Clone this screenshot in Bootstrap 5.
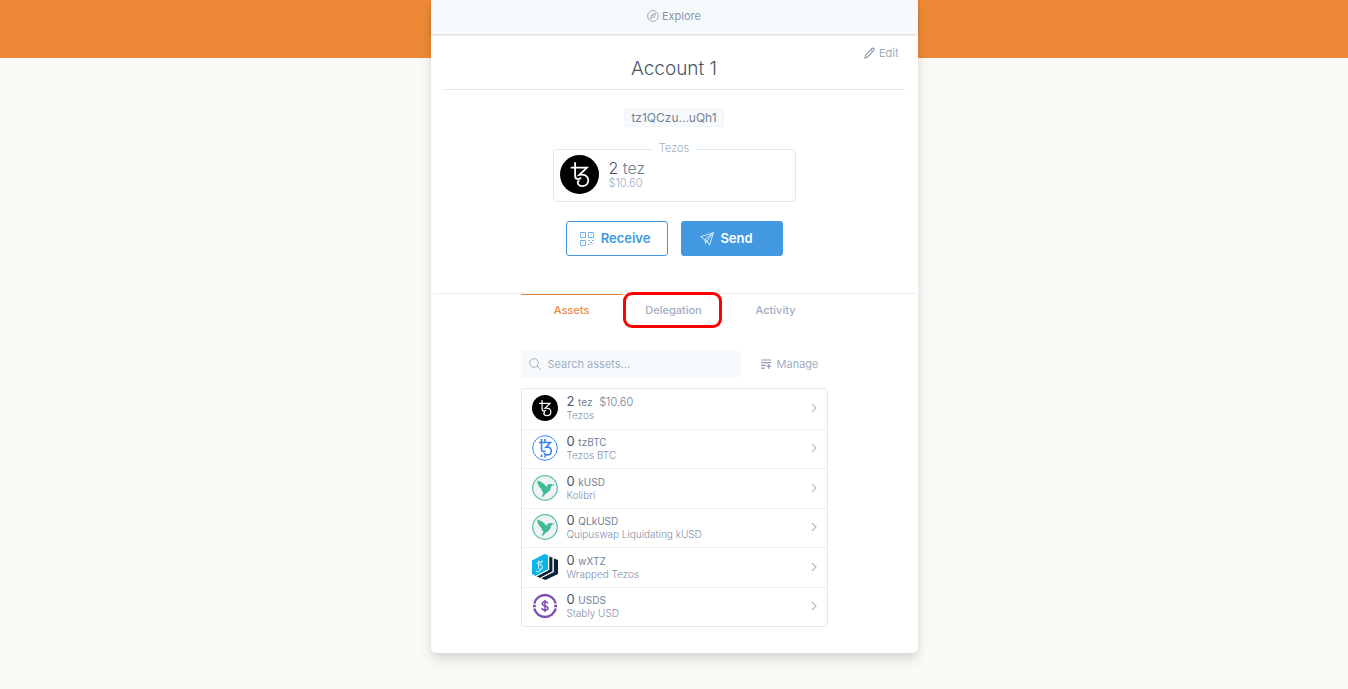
<!DOCTYPE html>
<html lang="en">
<head>
<meta charset="utf-8">
<meta name="viewport" content="width=device-width, initial-scale=1">
<title>Account 1 - Wallet</title>
<link href="https://cdn.jsdelivr.net/npm/bootstrap@5.3.0/dist/css/bootstrap.min.css" rel="stylesheet">
<style>
  body { font-family: Inter, "Liberation Sans", sans-serif; background: #fcfaf6; color: #4a5568; font-size: 11px; line-height: 16px; }
  a { color: inherit; text-decoration: none; }
  .page-top { background: linear-gradient(#ed8936 0 58px, transparent 58px); min-height: 100vh; }
  .sheet { max-width: 487px; background: #fff; border-radius: 0 0 5px 5px; box-shadow: 0 8px 14px rgba(0,0,0,.1), 0 3px 6px rgba(0,0,0,.06); }
  .topbar { height: 34px; background: #f7fafc; color: #8a94a8; box-shadow: 0 1px 2px rgba(0,0,0,.16); font-size: 12px; padding-bottom: 2px; }
  .topbar a { gap: 3px; font-size: 11px; }
  .title-wrap { margin: 0 13px; height: 56px; border-bottom: 1px solid #e2e8f0; padding-top: 22px; }
  .title-wrap h1 { font-size: 19px; line-height: 26px; font-weight: 300; color: #4a5568; }
  .edit-link { position: absolute; top: 11px; right: 6px; color: #a0aec0; }
  .address { font-size: 12px; line-height: 15px; color: #718096; background: #f7fafc; border: 1px solid #f1f5f9; border-radius: 2px; padding: 1px 6px; margin-top: 18px; }
  .balance { width: 243px; height: 53px; border: 1px solid #e2e8f0; border-radius: 4px; margin-top: 22px; padding: 0 6px 2px; gap: 10px; }
  .balance-label { position: absolute; top: -10px; left: 50%; transform: translateX(-50%); background: #fff; color: #a0aec0; padding: 0 7px; font-weight: 300; }
  .amount { font-size: 16px; line-height: 18px; font-weight: 300; }
  .muted { color: #718096; }
  .usd { font-size: 11px; line-height: 13px; color: #a0aec0; font-weight: 300; }
  .act { width: 102px; height: 35px; border: 1px solid #4299e1; border-radius: 3px; font-size: 13px; font-weight: 600; color: #4299e1; padding: 0 3px 0 0; gap: 7px; }
  .act.solid { background: #4299e1; color: #fff; gap: 6px; padding-right: 10px; }
  .panel { border-top: 1px solid #e8ebef; border-radius: 5px 5px 0 0; margin-top: 37px; padding-bottom: 26px; }
  .inner { max-width: 307px; }
  .tabs a { width: 102px; height: 34px; padding-top: 7px; text-align: center; color: #a0aec0; font-weight: 500; border-top: 1px solid transparent; }
  .tabs a.current { color: #ed8946; border-color: #ed8936; }
  .marker { position: absolute; top: -3px; left: 0; width: 99px; height: 36px; border: 3px solid #f00; border-radius: 9px; }
  .tools { margin-top: 22px; height: 28px; }
  .search { width: 220px; background: #f7fafc; border-radius: 4px; padding: 0 8px; gap: 7px; }
  .search input { border: 0; background: none; outline: 0; padding: 0; min-width: 0; color: #4a5568; }
  .search input::placeholder { color: #a0aec0; opacity: 1; }
  .manage { color: #a0aec0; gap: 6px; padding-right: 9px; }
  .assets { margin-top: 10px; border: 1px solid #e2e8f0; border-radius: 4px; display: grid; grid-auto-rows: 1fr; min-height: 239px; }
  .assets a { height: 100%; padding: 0 9px 1px 10px; gap: 9px; }
  .assets li + li { border-top: 1px solid #edf2f7; }
  .qty { font-size: 13px; line-height: 13px; color: #4a5568; }
  .qty span { font-size: 10px; color: #718096; }
  .qty .fiat { font-size: 11px; font-weight: 300; margin-left: 3px; }
  .token { font-size: 10px; line-height: 12px; color: #858fab; font-weight: 300; }
</style>
</head>
<body>
<svg class="d-none" xmlns="http://www.w3.org/2000/svg">
  <symbol id="tez" viewBox="0 0 40 40"><circle cx="20" cy="20" r="20" fill="#000"/><path d="M11 13h16.500L20 20.300c5.500-1 9 1.500 9 5.600 0 3.800-2.800 6-6 6-2.800 0-4.800-1.600-4.800-3.700 0-1.200.8-1.700 1.800-1.700M15.500 7.500v13.700q0 3.500 3 3.500 2 0 3-1.700" fill="none" stroke="#fff" stroke-width="1.900"/></symbol>
  <symbol id="chev" viewBox="0 0 8 10"><path d="M2 1l4 4-4 4" fill="none" stroke="#b0bccd" stroke-width="1.100"/></symbol>
  <symbol id="bird" viewBox="0 0 26 26"><circle cx="13" cy="13" r="12.300" fill="#eff3f8" stroke="#58c1a0" stroke-width="1.200"/><path d="M5 5.500c4 1 7.500 3 9.500 6.500.6-1.900 1.700-3 3.500-3 1.400 0 2 .7 5.500.5-2.500.9-4 1.200-4.500 2.500C18.500 15.500 16.500 17.500 14 18.500L10.300 22.500c-.3-1.500.2-3.300 1.200-4.700-1.500-1.200-2-2.400-1.900-3.700C7.300 12.500 5.500 9.500 5 5.500z" fill="#3fbd92"/></symbol>
</svg>
<div class="page-top">
  <main class="sheet mx-auto">
    <nav class="topbar d-flex justify-content-center align-items-center">
      <a href="#" class="d-flex align-items-center">
        <svg width="12" height="12" viewBox="0 0 12 12" fill="none" stroke="#9aa5b8" stroke-width=".9"><circle cx="6" cy="6" r="5.400"/><path d="M8.800 3.200L7.300 6.800 3.200 8.800 4.800 5zM4.800 5l2.500 1.800"/></svg>
        Explore</a>
    </nav>
    <section class="d-flex flex-column">
      <div class="title-wrap text-center position-relative">
        <h1 class="m-0">Account 1</h1>
        <a href="#" class="edit-link d-flex align-items-center gap-1"><svg width="11" height="12" viewBox="0 0 11 12" fill="none" stroke="#8f9bb0" stroke-width="1.100"><path d="M1 11l.5-2.800L8 1.500q1-.8 1.800 0t0 1.800L3.500 10zM6.800 2.800l1.800 1.800"/></svg>Edit</a>
      </div>
      <button type="button" class="address align-self-center">tz1QCzu...uQh1</button>
      <div class="balance position-relative align-self-center d-flex align-items-center">
        <div class="balance-label">Tezos</div>
        <svg width="39" height="39"><use href="#tez"/></svg>
        <div>
          <div class="amount">2 <span class="muted">tez</span></div>
          <div class="usd">$10.60</div>
        </div>
      </div>
      <div class="d-flex justify-content-center" style="gap:13px;margin-top:19px">
        <button type="button" class="btn act d-flex align-items-center justify-content-center">
          <svg width="14" height="14" viewBox="0 0 14 14" fill="none" stroke="#77b5ea" stroke-width="1"><path d="M.5.500h5v5h-5zM8.500.500h5v5h-5zM.5 8.500h5v5h-5zM2.500 3h1M10.500 3h1M2.500 11h1M8 8.500h2M12 8.500h2M10 10.500h2M8 12.500h1.500M11.500 12.500h1M13 11h1"/></svg>Receive</button>
        <button type="button" class="btn act solid d-flex align-items-center justify-content-center">
          <svg width="14" height="14" viewBox="0 0 14 14" fill="none" stroke="#d5eafb" stroke-width="1" stroke-linejoin="round"><path d="M13.400.700L.7 4.700l4 2.900zM13.400.700L9.500 13.200 7 8.900M4.700 7.600L5.600 11.500 7.200 9 4.700 7.600M13.400.700L7 8.900"/></svg>Send</button>
      </div>
    </section>
    <section class="panel">
      <div class="inner mx-auto">
        <nav class="tabs d-flex">
          <a href="#" class="current">Assets</a>
          <a href="#" class="position-relative">Delegation<span class="marker"></span></a>
          <a href="#">Activity</a>
        </nav>
        <div class="tools d-flex justify-content-between">
          <label class="search d-flex align-items-center">
            <svg width="12" height="12" viewBox="0 0 12 12" fill="none" stroke="#a0aec0" stroke-width="1"><circle cx="5" cy="5" r="4.300"/><path d="M8.200 8.200l3.500 3.400"/></svg>
            <input type="text" placeholder="Search assets..." aria-label="Search assets">
          </label>
          <a href="#" class="manage d-flex align-items-center"><svg width="10" height="10" viewBox="0 0 10 10" fill="none" stroke="#8f9bb0" stroke-width="1.200"><path d="M0 1h10M0 3.700h10M0 6.400h5M0 9.200h4M5.500 7.400h4.500M7.700 5.200v4.500"/></svg>Manage</a>
        </div>
        <ul class="assets list-unstyled mb-0">
          <li><a href="#" class="d-flex align-items-center"><svg width="26" height="26"><use href="#tez"/></svg>
            <div class="flex-grow-1"><div class="qty">2 <span>tez</span> <span class="fiat">$10.60</span></div><div class="token">Tezos</div></div><svg width="8" height="10"><use href="#chev"/></svg></a></li>
          <li><a href="#" class="d-flex align-items-center"><svg width="26" height="26" viewBox="0 0 26 26" fill="none" stroke="#3b82f0"><circle cx="13" cy="13" r="12.300"/><path stroke-width="1.600" d="M7 7.500h11.500L14 12.200c3.500-.5 5.300 1 5.300 3.700s-2 4-4 4-3-1-3-2.200M9.500 4v10q0 2.500 2 2.500 1.500 0 2-1M13 4v3.500M9.500 19.500V22M13 20.500v2"/></svg>
            <div class="flex-grow-1"><div class="qty">0 <span>tzBTC</span></div><div class="token">Tezos BTC</div></div><svg width="8" height="10"><use href="#chev"/></svg></a></li>
          <li><a href="#" class="d-flex align-items-center"><svg width="26" height="26"><use href="#bird"/></svg>
            <div class="flex-grow-1"><div class="qty">0 <span>kUSD</span></div><div class="token">Kolibri</div></div><svg width="8" height="10"><use href="#chev"/></svg></a></li>
          <li><a href="#" class="d-flex align-items-center"><svg width="26" height="26"><use href="#bird"/></svg>
            <div class="flex-grow-1"><div class="qty">0 <span>QLkUSD</span></div><div class="token">Quipuswap Liquidating kUSD</div></div><svg width="8" height="10"><use href="#chev"/></svg></a></li>
          <li><a href="#" class="d-flex align-items-center"><svg width="26" height="26" viewBox="0 0 26 26"><path d="M22 4.500l4 1.500v14L13.500 26l-4.500-1.800L22 18z" fill="#0d2138"/><path d="M17.300 2.500l4 1.500v13.500L8.500 24l-4-1.700 12.800-6.600z" fill="#0d2138"/><path d="M20.900 3.500v14L8.500 24" fill="none" stroke="#fff" stroke-width="1"/><path d="M16.500 1.500v14.300L3.500 22.500" fill="none" stroke="#fff" stroke-width="1"/><path d="M0 6.500L12.500 0 16 1.200v14L3.500 22 0 20z" fill="#0cb5e8"/><path d="M4.500 9.500l6-2.500M6.500 6.500v8q1 2 2.500 0M10.500 7l-3 4q3-.5 3 2t-3 4-3.500 0" stroke="#c8f3ff" fill="none" stroke-width="1"/></svg>
            <div class="flex-grow-1"><div class="qty">0 <span>wXTZ</span></div><div class="token">Wrapped Tezos</div></div><svg width="8" height="10"><use href="#chev"/></svg></a></li>
          <li><a href="#" class="d-flex align-items-center"><svg width="26" height="26" viewBox="0 0 26 26" fill="none" stroke="#7d4db0"><path stroke-width="2.400" d="M2.300 10.500a11 11 0 0 1 21.400 0M23.700 15.500a11 11 0 0 1-21.400 0M1 13h2.800M22.200 13H25"/><path stroke-width="1.500" d="M16 10.500c-.5-1.300-1.500-1.700-3-1.700-1.600 0-2.700.7-2.700 2 0 2.900 5.700 1.400 5.700 4.300 0 1.400-1.200 2.100-3 2.100-1.700 0-2.800-.7-3.100-2M13 7v12"/></svg>
            <div class="flex-grow-1"><div class="qty">0 <span>USDS</span></div><div class="token">Stably USD</div></div><svg width="8" height="10"><use href="#chev"/></svg></a></li>
        </ul>
      </div>
    </section>
  </main>
</div>
<script src="https://cdn.jsdelivr.net/npm/bootstrap@5.3.0/dist/js/bootstrap.bundle.min.js"></script>
</body>
</html>
